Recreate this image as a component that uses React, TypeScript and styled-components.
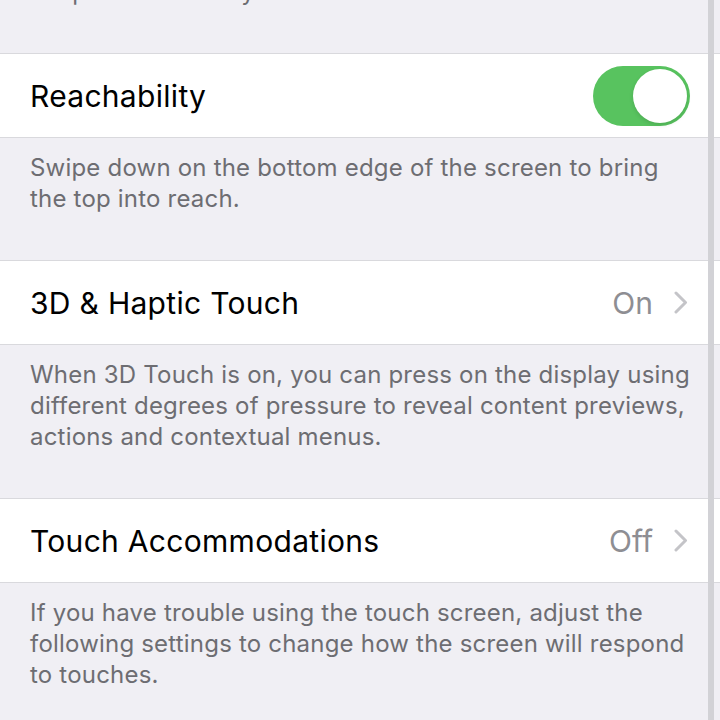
import React from 'react';
import styled, { createGlobalStyle } from 'styled-components';

const GlobalStyle = createGlobalStyle`
  html, body {
    margin: 0;
    padding: 0;
    background: #f0eff4;
    overflow: hidden;
  }
  body {
    font-family: Inter, 'Noto Sans', 'Liberation Sans', sans-serif;
    -webkit-font-smoothing: antialiased;
  }
`;

const Screen = styled.div`
  position: relative;
  width: 720px;
  height: 720px;
  overflow: hidden;
  background: #f0eff4;
`;

const List = styled.div`
  display: flex;
  flex-direction: column;
  margin-top: -38px;
`;

const Cell = styled.div`
  display: flex;
  align-items: center;
  justify-content: space-between;
  height: 83px;
  padding: 0 30px;
  background: #fff;
  border-top: 1px solid #d9d9dd;
  border-bottom: 1px solid #d9d9dd;
`;

const Title = styled.span`
  font-size: 30px;
  color: #000;
  letter-spacing: 0.3px;
`;

const Detail = styled.div`
  display: flex;
  align-items: center;
  gap: 21px;
  margin-right: 2px;
  font-size: 30px;
  color: #8e8e93;
`;

const Footer = styled.p`
  margin: 0;
  padding: 14px 30px 46px;
  font-size: 24px;
  line-height: 31px;
  color: #6d6d72;
  letter-spacing: 0.2px;
`;

const Track = styled.div<{ $on: boolean }>`
  position: relative;
  width: 97px;
  height: 60px;
  border-radius: 30px;
  background: ${(p) => (p.$on ? '#58c35f' : '#e5e5ea')};
`;

const Knob = styled.div<{ $on: boolean }>`
  position: absolute;
  top: 3px;
  left: ${(p) => (p.$on ? '40px' : '3px')};
  width: 54px;
  height: 54px;
  border-radius: 50%;
  background: #fff;
  box-shadow: 0 2px 4px rgba(0, 0, 0, 0.12);
`;

const Rail = styled.div`
  position: absolute;
  top: 0;
  bottom: 0;
  right: 6px;
  width: 6px;
  background: #d2d2d6;
`;

const Chevron = () => (
  <svg width="14" height="23" viewBox="0 0 14 23" fill="none">
    <path d="M2 2l9.5 9.5L2 21" stroke="#c4c4c8" strokeWidth="3" strokeLinecap="round" strokeLinejoin="round" />
  </svg>
);

const Toggle: React.FC<{ on: boolean }> = ({ on }) => (
  <Track $on={on}>
    <Knob $on={on} />
  </Track>
);

const App: React.FC = () => (
  <Screen>
    <GlobalStyle />
    <List>
      <Footer>adaptive accessory.</Footer>

      <Cell>
        <Title>Reachability</Title>
        <Toggle on />
      </Cell>
      <Footer>
        Swipe down on the bottom edge of the screen to bring
        <br />
        the top into reach.
      </Footer>

      <Cell>
        <Title>3D &amp; Haptic Touch</Title>
        <Detail>
          On
          <Chevron />
        </Detail>
      </Cell>
      <Footer>
        When 3D Touch is on, you can press on the display using
        <br />
        different degrees of pressure to reveal content previews,
        <br />
        actions and contextual menus.
      </Footer>

      <Cell>
        <Title>Touch Accommodations</Title>
        <Detail>
          Off
          <Chevron />
        </Detail>
      </Cell>
      <Footer>
        If you have trouble using the touch screen, adjust the
        <br />
        following settings to change how the screen will respond
        <br />
        to touches.
      </Footer>
    </List>
    <Rail />
  </Screen>
);

export default App;
